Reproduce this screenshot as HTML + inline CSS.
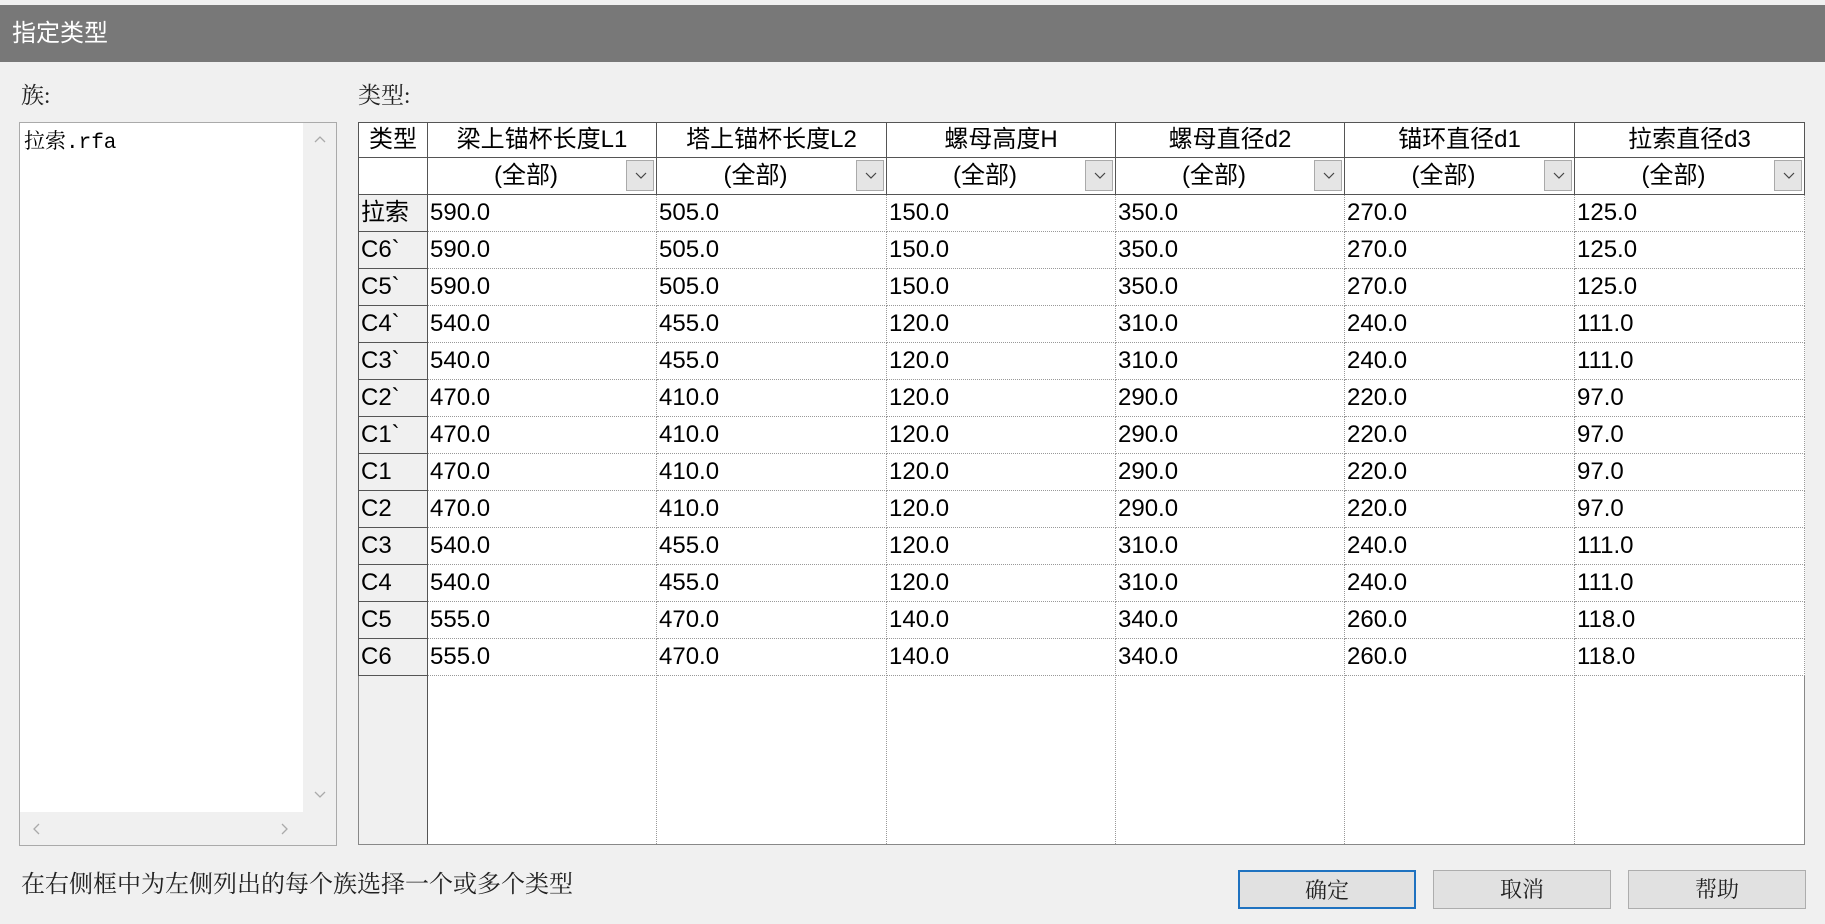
<!DOCTYPE html>
<html><head><meta charset="utf-8"><style>
*{margin:0;padding:0;box-sizing:border-box}
body{width:1825px;height:924px;background:#f0f0f0;position:relative;overflow:hidden;font-family:"Liberation Sans","Noto Sans CJK SC",sans-serif;color:#000}
.abs{position:absolute}
#title{left:0;top:5px;width:1825px;height:57px;background:#787878;color:#fff;font-size:24px;line-height:57px;padding-left:12px}
.lbl{font-family:"Liberation Serif","Noto Serif CJK SC",serif;font-size:23px;color:#222}
#list{left:19px;top:122px;width:318px;height:724px;background:#fff;border:1px solid #aaa}
#vs{right:0;top:0;width:33px;height:690px;background:#f0f0f0}
#hs{left:0;bottom:0;width:316px;height:33px;background:#f0f0f0}
.arr{position:absolute}
table{position:absolute;left:358px;top:122px;border-collapse:collapse;table-layout:fixed;font-size:24px;background:#fff}
td{height:37px;border-right:1px dotted #999;border-bottom:1px dotted #999;padding:0 0 0 2px;white-space:nowrap;overflow:hidden;line-height:36px}
td.rh{background:#f0f0f0;border:1px solid #555;padding-left:2px}
tr.h td{height:35px;border:1px solid #555;text-align:center;background:#fff;padding:0;line-height:34px}
tr.f td{height:36px;border:1px solid #555;border-top:none;text-align:center;position:relative;padding:0 32px 0 0;background:#fff}
tr.f td.rh{background:#fff;padding:0}
.dd{position:absolute;right:2px;top:2px;width:28px;height:31px;background:#e5e5e5;border:1px solid #aaa;padding:0}
.dd svg{position:absolute;left:8px;top:11px}
#outer{left:358px;top:122px;width:1447px;height:723px;border:1px solid #888;background:#fff}
.btn{top:870px;height:39px;background:#e1e1e1;border:1px solid #adadad;font-size:22px;text-align:center;line-height:37px}
</style></head><body>
<div id="title" class="abs">指定类型</div>
<div class="abs lbl" style="left:21px;top:77px">族:</div>
<div class="abs lbl" style="left:358px;top:77px">类型:</div>
<div id="list" class="abs">
<div class="abs" style="left:4px;top:2px;font-family:'Liberation Mono','Noto Serif CJK SC',serif;font-size:21px">拉索.rfa</div>
<div id="vs" class="abs">
<svg class="arr" style="left:11px;top:12px" width="12" height="8"><path d="M1 7 L6 2 L11 7" fill="none" stroke="#aaa" stroke-width="1.3"/></svg>
<svg class="arr" style="left:11px;top:668px" width="12" height="8"><path d="M1 1 L6 6 L11 1" fill="none" stroke="#aaa" stroke-width="1.3"/></svg></div>
<div id="hs" class="abs">
<svg class="arr" style="left:12px;top:11px" width="8" height="12"><path d="M7 1 L2 6 L7 11" fill="none" stroke="#aaa" stroke-width="1.3"/></svg>
<svg class="arr" style="left:261px;top:11px" width="8" height="12"><path d="M1 1 L6 6 L1 11" fill="none" stroke="#aaa" stroke-width="1.3"/></svg></div>
</div>
<div id="outer" class="abs">
<div class="abs" style="left:0;top:0;width:69px;height:721px;background:#f0f0f0;border-right:1px solid #555"></div>
<div class="abs" style="left:297px;top:0;height:721px;border-left:1px dotted #999"></div>
<div class="abs" style="left:527px;top:0;height:721px;border-left:1px dotted #999"></div>
<div class="abs" style="left:756px;top:0;height:721px;border-left:1px dotted #999"></div>
<div class="abs" style="left:985px;top:0;height:721px;border-left:1px dotted #999"></div>
<div class="abs" style="left:1215px;top:0;height:721px;border-left:1px dotted #999"></div>
</div>
<table>
<colgroup><col style="width:69px"><col style="width:229px"><col style="width:230px"><col style="width:229px"><col style="width:229px"><col style="width:230px"><col style="width:230px"></colgroup>
<tr class="h"><td>类型</td><td>梁上锚杯长度L1</td><td>塔上锚杯长度L2</td><td>螺母高度H</td><td>螺母直径d2</td><td>锚环直径d1</td><td>拉索直径d3</td></tr>
<tr class="f"><td class="rh"></td>
<td>(全部)<span class="dd"><svg width="12" height="8"><path d="M1 1 L6 6 L11 1" fill="none" stroke="#444" stroke-width="1.2"/></svg></span></td>
<td>(全部)<span class="dd"><svg width="12" height="8"><path d="M1 1 L6 6 L11 1" fill="none" stroke="#444" stroke-width="1.2"/></svg></span></td>
<td>(全部)<span class="dd"><svg width="12" height="8"><path d="M1 1 L6 6 L11 1" fill="none" stroke="#444" stroke-width="1.2"/></svg></span></td>
<td>(全部)<span class="dd"><svg width="12" height="8"><path d="M1 1 L6 6 L11 1" fill="none" stroke="#444" stroke-width="1.2"/></svg></span></td>
<td>(全部)<span class="dd"><svg width="12" height="8"><path d="M1 1 L6 6 L11 1" fill="none" stroke="#444" stroke-width="1.2"/></svg></span></td>
<td>(全部)<span class="dd"><svg width="12" height="8"><path d="M1 1 L6 6 L11 1" fill="none" stroke="#444" stroke-width="1.2"/></svg></span></td></tr>
<tr><td class="rh">拉索</td><td>590.0</td><td>505.0</td><td>150.0</td><td>350.0</td><td>270.0</td><td>125.0</td></tr>
<tr><td class="rh">C6`</td><td>590.0</td><td>505.0</td><td>150.0</td><td>350.0</td><td>270.0</td><td>125.0</td></tr>
<tr><td class="rh">C5`</td><td>590.0</td><td>505.0</td><td>150.0</td><td>350.0</td><td>270.0</td><td>125.0</td></tr>
<tr><td class="rh">C4`</td><td>540.0</td><td>455.0</td><td>120.0</td><td>310.0</td><td>240.0</td><td>111.0</td></tr>
<tr><td class="rh">C3`</td><td>540.0</td><td>455.0</td><td>120.0</td><td>310.0</td><td>240.0</td><td>111.0</td></tr>
<tr><td class="rh">C2`</td><td>470.0</td><td>410.0</td><td>120.0</td><td>290.0</td><td>220.0</td><td>97.0</td></tr>
<tr><td class="rh">C1`</td><td>470.0</td><td>410.0</td><td>120.0</td><td>290.0</td><td>220.0</td><td>97.0</td></tr>
<tr><td class="rh">C1</td><td>470.0</td><td>410.0</td><td>120.0</td><td>290.0</td><td>220.0</td><td>97.0</td></tr>
<tr><td class="rh">C2</td><td>470.0</td><td>410.0</td><td>120.0</td><td>290.0</td><td>220.0</td><td>97.0</td></tr>
<tr><td class="rh">C3</td><td>540.0</td><td>455.0</td><td>120.0</td><td>310.0</td><td>240.0</td><td>111.0</td></tr>
<tr><td class="rh">C4</td><td>540.0</td><td>455.0</td><td>120.0</td><td>310.0</td><td>240.0</td><td>111.0</td></tr>
<tr><td class="rh">C5</td><td>555.0</td><td>470.0</td><td>140.0</td><td>340.0</td><td>260.0</td><td>118.0</td></tr>
<tr><td class="rh">C6</td><td>555.0</td><td>470.0</td><td>140.0</td><td>340.0</td><td>260.0</td><td>118.0</td></tr>
</table>
<div class="abs lbl" style="left:21px;top:864px;font-size:24px">在右侧框中为左侧列出的每个族选择一个或多个类型</div>
<div class="abs btn lbl" style="left:1238px;width:178px;border:2px solid #1f72c0">确定</div>
<div class="abs btn lbl" style="left:1433px;width:178px">取消</div>
<div class="abs btn lbl" style="left:1628px;width:178px">帮助</div>
</body></html>
